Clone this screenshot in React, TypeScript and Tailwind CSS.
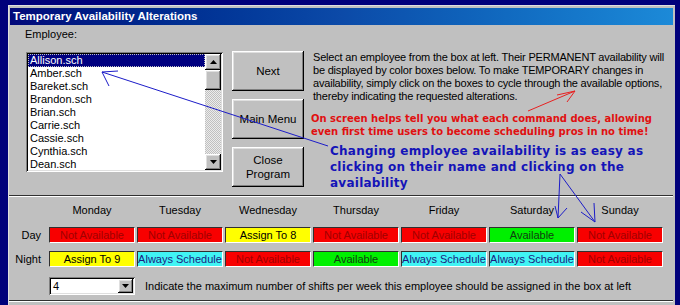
import React from 'react';

const ui = "font-['Liberation_Sans',Arial,sans-serif]";
const raised =
  'shadow-[inset_-1px_-1px_0_#000,inset_1px_1px_0_#fff,inset_-2px_-2px_0_#808080,inset_2px_2px_0_#dfdfdf]';
const sunken =
  'shadow-[inset_1px_1px_0_#808080,inset_-1px_-1px_0_#fff,inset_2px_2px_0_#000,inset_-2px_-2px_0_#dfdfdf]';

const employees = [
  'Allison.sch',
  'Amber.sch',
  'Bareket.sch',
  'Brandon.sch',
  'Brian.sch',
  'Carrie.sch',
  'Cassie.sch',
  'Cynthia.sch',
  'Dean.sch',
];

const days = ['Monday', 'Tuesday', 'Wednesday', 'Thursday', 'Friday', 'Saturday', 'Sunday'];

const dayShift = [
  'Not Available',
  'Not Available',
  'Assign To 8',
  'Not Available',
  'Not Available',
  'Available',
  'Not Available',
];
const nightShift = [
  'Assign To 9',
  'Always Schedule',
  'Not Available',
  'Available',
  'Always Schedule',
  'Always Schedule',
  'Not Available',
];

const cellStyle: Record<string, string> = {
  'Not Available': 'bg-[#f80000] text-[#a00000]',
  'Assign To 8': 'bg-[#ffff00] text-black',
  'Assign To 9': 'bg-[#ffff00] text-black',
  Available: 'bg-[#00f000] text-[#104010]',
  'Always Schedule': 'bg-[#40f4f4] text-[#1c1c80]',
};

function ArrowButton({ up }: { up?: boolean }) {
  return (
    <div className={`w-[16px] h-[16px] bg-[#c0c0c0] ${raised} flex items-center justify-center`}>
      <svg width="7" height="4" viewBox="0 0 7 4">
        <path d={up ? 'M0 4 L3.5 0 L7 4 Z' : 'M0 0 L7 0 L3.5 4 Z'} fill="#000" />
      </svg>
    </div>
  );
}

function ListBox() {
  return (
    <div className={`mt-[11px] ml-[1px] w-[197px] h-[120px] bg-white ${sunken} p-[2px] flex`}>
      <div className="flex-1 flex flex-col">
        {employees.map((name, i) => (
          <div
            key={name}
            className={`h-[13px] leading-[13px] text-[11px] pl-[2px] whitespace-nowrap ${
              i === 0 ? 'bg-[#000080] text-white outline-1 outline-dotted outline-[#c0c0c0] -outline-offset-1' : 'text-black'
            }`}
          >
            {name}
          </div>
        ))}
      </div>
      <div className="w-[16px] flex flex-col bg-[image:repeating-conic-gradient(#c0c0c0_0_25%,#ececec_0_50%)] bg-[length:2px_2px]">
        <ArrowButton up />
        <div className={`h-[20px] bg-[#c0c0c0] ${raised}`} />
        <div className="flex-1" />
        <ArrowButton />
      </div>
    </div>
  );
}

function WinButton({ children }: { children: React.ReactNode }) {
  return (
    <div
      className={`w-[72px] h-[40px] bg-[#c0c0c0] ${raised} flex items-center justify-center text-center text-[11.5px] leading-[14px] text-black`}
    >
      {children}
    </div>
  );
}

function ShiftRow({ label, cells }: { label: string; cells: string[] }) {
  return (
    <div className="flex h-[16px]">
      <div className="w-[32px] text-right text-[11px] leading-[16px] text-black">{label}</div>
      <div className="ml-[8px] flex gap-[2px]">
        {cells.map((c, i) => (
          <div
            key={i}
            className={`w-[86px] h-[16px] border-t border-l border-[#303030] border-b border-r border-b-white border-r-white text-center text-[11px] leading-[14px] whitespace-nowrap overflow-hidden ${cellStyle[c]}`}
          >
            {c}
          </div>
        ))}
      </div>
    </div>
  );
}

export default function App() {
  return (
    <div className={`relative w-[680px] h-[305px] overflow-hidden bg-[#00007b] pl-[8px] pt-[5px] ${ui}`}>
      <div className="w-[667px] h-[320px] bg-[#c0c0c0] border-l border-t border-[#dfdfdf] flex flex-col">
        {/* title bar */}
        <div className="mt-[2px] ml-[1px] mr-[2px] h-[17px] bg-linear-to-r from-[#03087a] via-[#0c4aa8] to-[#1c8ad8] flex items-center pl-[3px] text-white font-bold text-[11.5px]">
          Temporary Availability Alterations
        </div>

        {/* top: list, buttons, help */}
        <div className="flex h-[170px]">
          <div className="pl-[16px] pt-[3px]">
            <div className="text-[11px] leading-[13px] text-black">Employee:</div>
            <ListBox />
          </div>

          <div className="ml-[9px] pt-[26px] flex flex-col gap-[8px]">
            <WinButton>Next</WinButton>
            <WinButton>Main Menu</WinButton>
            <WinButton>
              Close
              <br />
              Program
            </WinButton>
          </div>

          <div className="ml-[9px] pt-[26px] flex flex-col whitespace-nowrap">
            <div className="text-[11px] leading-[13px] text-black tracking-[-0.2px]">
              Select an employee from the box at left. Their PERMANENT availability will
              <br />
              be displayed by color boxes below. To make TEMPORARY changes in
              <br />
              availability, simply click on the boxes to cycle through the available options,
              <br />
              thereby indicating the requested alterations.
            </div>
            <div className="mt-[9px] -ml-[2px] font-['DejaVu_Sans',Verdana,sans-serif] font-bold text-[10px] leading-[13px] text-[#e01010]">
              On screen helps tell you what each command does, allowing
              <br />
              even first time users to become scheduling pros in no time!
            </div>
            <div className="mt-[5px] ml-[17px] font-['DejaVu_Sans',Verdana,sans-serif] font-bold text-[12px] leading-[16px] tracking-[0.25px] text-[#1414b8]">
              Changing employee availability is as easy as
              <br />
              clicking on their name and clicking on the
              <br />
              availability
            </div>
          </div>
        </div>

        {/* etched separator */}
        <div className="mr-[2px] h-[2px] border-t border-[#303030] border-b border-b-white" />

        {/* weekly grid */}
        <div className="flex flex-col">
          <div className="flex h-[26px] items-center">
            <div className="w-[40px]" />
            <div className="flex gap-[2px]">
              {days.map((d) => (
                <div key={d} className="w-[86px] text-center text-[11px] text-black">
                  {d}
                </div>
              ))}
            </div>
          </div>
          <div className="mt-[4px]">
            <ShiftRow label="Day" cells={dayShift} />
          </div>
          <div className="mt-[8px]">
            <ShiftRow label="Night" cells={nightShift} />
          </div>
          <div className="mt-[10px] flex items-center h-[18px]">
            <div className={`ml-[40px] w-[86px] h-[18px] bg-white ${sunken} flex items-center pl-[4px] pr-[2px]`}>
              <span className="flex-1 text-[11px] text-black">4</span>
              <div className={`w-[15px] h-[14px] bg-[#c0c0c0] ${raised} flex items-center justify-center`}>
                <svg width="7" height="4" viewBox="0 0 7 4">
                  <path d="M0 0 L7 0 L3.5 4 Z" fill="#000" />
                </svg>
              </div>
            </div>
            <div className="ml-[10px] text-[11px] text-black whitespace-nowrap">
              Indicate the maximum number of shifts per week this employee should be assigned in the box at left
            </div>
          </div>
          <div className="mt-[5px] mr-[2px] h-[2px] border-t border-[#303030] border-b border-b-white" />
        </div>
      </div>

      {/* annotation arrows drawn over the dialog */}
      <svg
        className="absolute inset-0 pointer-events-none"
        width="680"
        height="305"
        viewBox="0 0 680 305"
        fill="none"
      >
        <g stroke="#1c1cc8" strokeWidth="1">
          <path d="M328 146 L102 72" />
          <path d="M118 71 L102 72 L109 86" />
          <path d="M560 174 L558 218" />
          <path d="M555 206 L558 218 L567 208" />
          <path d="M560 174 L595 222" />
          <path d="M581 212 L595 222 L594 203" />
        </g>
        <g stroke="#e82020" strokeWidth="1">
          <path d="M528 111 L575 91" />
          <path d="M557 95 L575 91 L567 102" />
        </g>
      </svg>
    </div>
  );
}
